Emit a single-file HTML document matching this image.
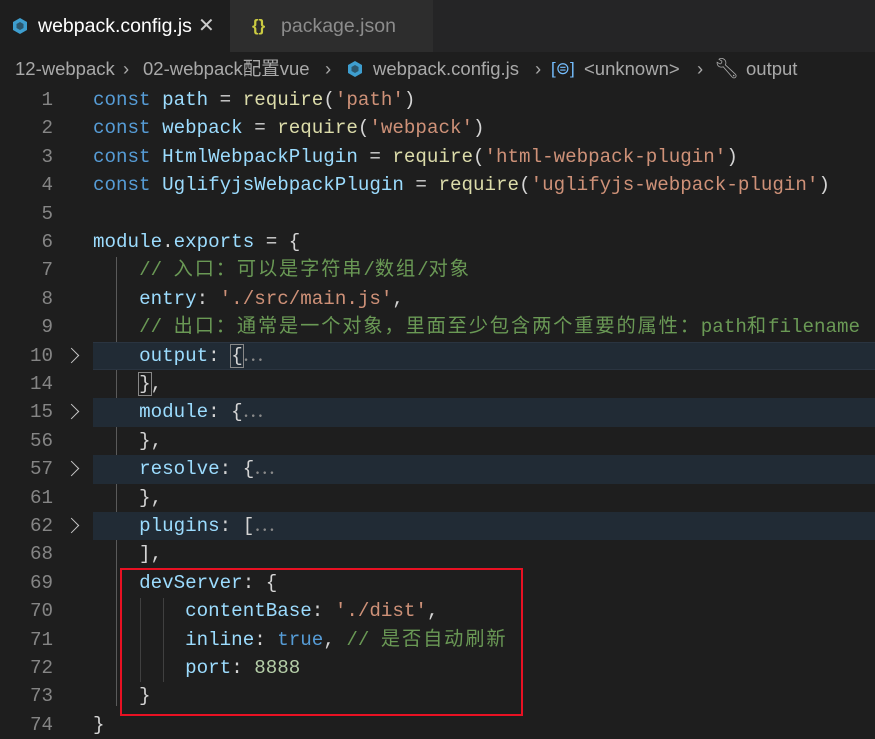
<!DOCTYPE html>
<html><head><meta charset="utf-8"><style>
body{margin:0;width:875px;height:736px;background:#1e1e1e;overflow:hidden;position:relative;font-family:"Liberation Sans","Noto Sans CJK SC",sans-serif}
.tabs{position:absolute;left:0;top:0;width:875px;height:52px;background:#252526}
.tab{position:absolute;top:0;height:52px;font-size:19.5px;line-height:52px}
.bc{position:absolute;top:52px;left:0;width:875px;height:34px;font-size:18.5px;color:#a9a9a9;line-height:34px;white-space:nowrap}
.row{position:absolute;left:0;width:875px;height:28.4px;font-family:"Liberation Mono","Noto Sans CJK SC",monospace;font-size:19.2px;line-height:28.4px;white-space:pre;color:#d4d4d4}
.ln{position:absolute;right:822px;color:#858585;text-align:right}
.code{position:absolute;left:93px}
.hl{background:#212b35}
.k{color:#569cd6}.v{color:#9cdcfe}.f{color:#dcdcaa}.s{color:#ce9178}.c{color:#6a9955}.n{color:#b5cea8}.g{color:#8a8a8a}
.cj{letter-spacing:1.9px}
.fold{position:absolute;left:66px;top:8px;width:10px;height:10px;border-right:1.6px solid #c5c5c5;border-top:1.6px solid #c5c5c5;transform:rotate(45deg)}
.guide{position:absolute;width:1px;background:#404040}
</style></head><body>
<div class="tabs">
 <div class="tab" style="left:0;width:230px;background:#1e1e1e;color:#fff">
  <svg style="position:absolute;left:11px;top:17px" width="18" height="18" viewBox="0 0 18 18"><path d="M9 1L16 5v8l-7 4-7-4V5z" fill="#3e9ecf"/><path d="M9 5l3.5 2v4L9 13 5.5 11V7z" fill="#1e1e1e" opacity=".55"/></svg>
  <span style="position:absolute;left:38px">webpack.config.js</span>
  <span style="position:absolute;left:198px;color:#ccc;font-size:20px">✕</span>
 </div>
 <div class="tab" style="left:230px;width:203px;background:#2d2d2d;color:#8c8c8c">
  <span style="position:absolute;left:22px;color:#cbcb41;font-weight:bold;font-size:17px">{}</span>
  <span style="position:absolute;left:51px">package.json</span>
 </div>
</div>
<div class="bc">
 <span style="position:absolute;left:15px">12-webpack</span>
 <span style="position:absolute;left:123px">›</span>
 <span style="position:absolute;left:143px">02-webpack配置vue</span>
 <span style="position:absolute;left:325px">›</span>
 <svg style="position:absolute;left:346px;top:8px" width="18" height="18" viewBox="0 0 18 18"><path d="M9 1L16 5v8l-7 4-7-4V5z" fill="#3e9ecf"/><path d="M9 5l3.5 2v4L9 13 5.5 11V7z" fill="#1e1e1e" opacity=".55"/></svg>
 <span style="position:absolute;left:373px">webpack.config.js</span>
 <span style="position:absolute;left:535px">›</span>
 <span style="position:absolute;left:551px;color:#75beff;font-size:17px">[⊜]</span>
 <span style="position:absolute;left:584px">&lt;unknown&gt;</span>
 <span style="position:absolute;left:697px">›</span>
 <span style="position:absolute;left:714px;font-size:20px">🔧︎</span>
 <span style="position:absolute;left:746px">output</span>
</div>
<div class="guide" style="left:116px;top:257px;height:449px;background:#5a5a5a"></div>
<div class="guide" style="left:140px;top:598px;height:84px"></div>
<div class="guide" style="left:163px;top:598px;height:84px"></div>

<div class="row" style="top:86px"><span class="ln">1</span><span class="code"><span class="k">const</span> <span class="v">path</span> = <span class="f">require</span>(<span class="s">'path'</span>)</span></div>
<div class="row" style="top:114.4px"><span class="ln">2</span><span class="code"><span class="k">const</span> <span class="v">webpack</span> = <span class="f">require</span>(<span class="s">'webpack'</span>)</span></div>
<div class="row" style="top:142.8px"><span class="ln">3</span><span class="code"><span class="k">const</span> <span class="v">HtmlWebpackPlugin</span> = <span class="f">require</span>(<span class="s">'html-webpack-plugin'</span>)</span></div>
<div class="row" style="top:171.2px"><span class="ln">4</span><span class="code"><span class="k">const</span> <span class="v">UglifyjsWebpackPlugin</span> = <span class="f">require</span>(<span class="s">'uglifyjs-webpack-plugin'</span>)</span></div>
<div class="row" style="top:199.6px"><span class="ln">5</span></div>
<div class="row" style="top:228px"><span class="ln">6</span><span class="code"><span class="v">module</span>.<span class="v">exports</span> = {</span></div>
<div class="row" style="top:256.4px"><span class="ln">7</span><span class="code">    <span class="c">// <span class="cj">入口：可以是字符串</span>/<span class="cj">数组</span>/<span class="cj">对象</span></span></span></div>
<div class="row" style="top:284.8px"><span class="ln">8</span><span class="code">    <span class="v">entry</span>: <span class="s">'./src/main.js'</span>,</span></div>
<div class="row" style="top:313.2px"><span class="ln">9</span><span class="code">    <span class="c">// <span class="cj">出口：通常是一个对象，里面至少包含两个重要的属性：</span>path<span class="cj">和</span>filename</span></span></div>
<div class="row hl" style="top:341.6px;left:93px;width:782px;border-top:1px solid #2a3440;border-bottom:1px solid #2a3440;box-sizing:border-box"></div>
<div class="row" style="top:341.6px"><span class="ln">10</span><span class="fold"></span><span class="code">    <span class="v">output</span>: <span style="outline:1px solid #888">{</span><span class="g">⋯</span></span></div>
<div class="row" style="top:370px"><span class="ln">14</span><span class="code">    <span style="outline:1px solid #888">}</span>,</span></div>
<div class="row hl" style="top:398.4px;left:93px;width:782px"></div>
<div class="row" style="top:398.4px"><span class="ln">15</span><span class="fold"></span><span class="code">    <span class="v">module</span>: {<span class="g">⋯</span></span></div>
<div class="row" style="top:426.8px"><span class="ln">56</span><span class="code">    },</span></div>
<div class="row hl" style="top:455.2px;left:93px;width:782px"></div>
<div class="row" style="top:455.2px"><span class="ln">57</span><span class="fold"></span><span class="code">    <span class="v">resolve</span>: {<span class="g">⋯</span></span></div>
<div class="row" style="top:483.6px"><span class="ln">61</span><span class="code">    },</span></div>
<div class="row hl" style="top:512px;left:93px;width:782px"></div>
<div class="row" style="top:512px"><span class="ln">62</span><span class="fold"></span><span class="code">    <span class="v">plugins</span>: [<span class="g">⋯</span></span></div>
<div class="row" style="top:540.4px"><span class="ln">68</span><span class="code">    ],</span></div>
<div class="row" style="top:568.8px"><span class="ln">69</span><span class="code">    <span class="v">devServer</span>: {</span></div>
<div class="row" style="top:597.2px"><span class="ln">70</span><span class="code">        <span class="v">contentBase</span>: <span class="s">'./dist'</span>,</span></div>
<div class="row" style="top:625.6px"><span class="ln">71</span><span class="code">        <span class="v">inline</span>: <span class="k">true</span>, <span class="c">// <span class="cj">是否自动刷新</span></span></span></div>
<div class="row" style="top:654px"><span class="ln">72</span><span class="code">        <span class="v">port</span>: <span class="n">8888</span></span></div>
<div class="row" style="top:682.4px"><span class="ln">73</span><span class="code">    }</span></div>
<div class="row" style="top:710.8px"><span class="ln">74</span><span class="code">}</span></div>
<div style="position:absolute;left:120px;top:568px;width:399px;height:144px;border:2px solid #e81123"></div>
</body></html>
